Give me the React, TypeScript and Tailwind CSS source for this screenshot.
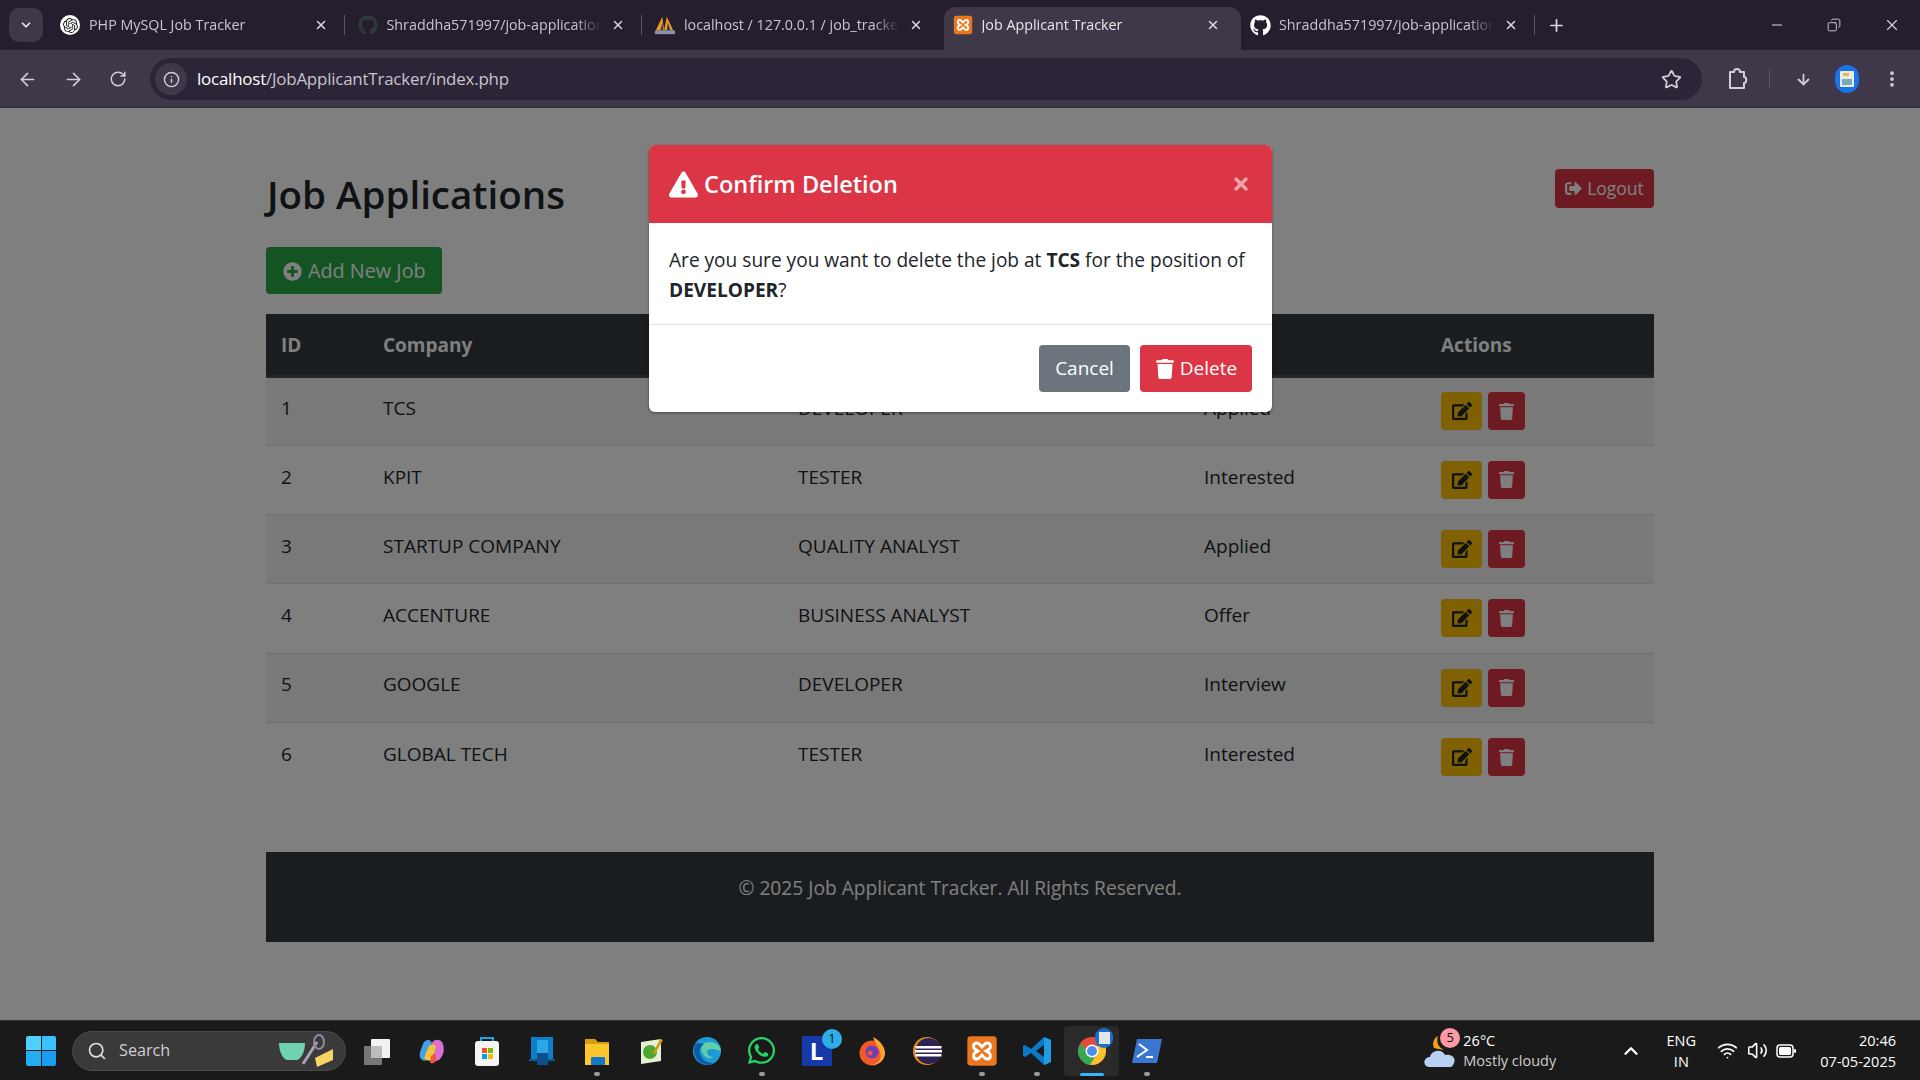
import React from "react";
import { FaExclamationTriangle, FaEdit, FaTrash, FaPlusCircle, FaSignOutAlt, FaGithub, FaWhatsapp } from "react-icons/fa";
import { SiOpenai } from "react-icons/si";
import { ArrowLeft, ArrowRight, RotateCw, Info, Star, ArrowDown, EllipsisVertical, X, Plus, Minus, ChevronDown, ChevronUp, Search, Wifi, Volume2, Copy } from "lucide-react";

const rows = [
  ["1", "TCS", "DEVELOPER", "Applied"],
  ["2", "KPIT", "TESTER", "Interested"],
  ["3", "STARTUP COMPANY", "QUALITY ANALYST", "Applied"],
  ["4", "ACCENTURE", "BUSINESS ANALYST", "Offer"],
  ["5", "GOOGLE", "DEVELOPER", "Interview"],
  ["6", "GLOBAL TECH", "TESTER", "Interested"],
];

function Xampp({ s = 20 }: { s?: number }) {
  return (
    <svg width={s} height={s} viewBox="0 0 24 24">
      <rect x="1" y="1" width="22" height="22" rx="2.500" fill="#e8771f" />
      <path d="M8 6c-2.500 0-3 3-1.500 4.500L9 12l-2.500 1.500C5 15 5.500 18 8 18c2 0 3-2 4-3 1 1 2 3 4 3 2.500 0 3-3 1.500-4.500L15 12l2.500-1.500C19 9 18.500 6 16 6c-2 0-3 2-4 3-1-1-2-3-4-3z" fill="none" stroke="#fff" strokeWidth="2.200" />
    </svg>
  );
}

function Pma() {
  return (
    <svg width="22" height="22" viewBox="0 0 24 24">
      <path d="M2 18 9 3l2 15zM11 18l3-15 7 15z" fill="#f09a1c" />
      <path d="M7 18 9 9l1 9zM14 18l1-9 3 9z" fill="#27396b" />
      <rect x="1" y="18" width="22" height="4" fill="#8c8fa6" />
    </svg>
  );
}

function Tab({ icon, title, active, sep }: { icon: React.ReactNode; title: string; active?: boolean; sep?: boolean }) {
  return (
    <div className={`relative flex h-[43px] w-[297.500px] shrink-0 items-center self-end pb-[7px] pl-[8px] pr-[21px] ${active ? "rounded-t-[12px] bg-[#3f3848] text-[#e8e6ea]" : "text-[#c9c5cf]"}`}>
      <span className="flex h-[22px] w-[22px] shrink-0 items-center justify-center">{icon}</span>
      <span className="ml-[8px] flex-1 overflow-hidden whitespace-nowrap text-[14.300px] [mask-image:linear-gradient(to_right,black_88%,transparent)]">{title}</span>
      <X size={14} strokeWidth={2.500} className="ml-[10px] shrink-0 text-[#dcd9e0]" />
      {sep && <span className="absolute right-[4px] top-[8px] h-[20px] w-px bg-[#5a5463]" />}
    </div>
  );
}

function Chrome() {
  return (
    <div className="h-[108px] bg-[#251e2f] font-['Open_Sans',sans-serif]">
      <div className="flex h-[50px] items-end">
        <div className="ml-[9px] mr-[8px] mb-[8px] flex h-[34px] w-[34px] shrink-0 items-center justify-center rounded-[10px] bg-[#3f3848] text-[#e8e6ea]">
          <ChevronDown size={14} strokeWidth={3} />
        </div>
        <Tab sep title="PHP MySQL Job Tracker" icon={<span className="flex h-[20px] w-[20px] items-center justify-center rounded-full bg-white"><SiOpenai size={15} className="text-[#222]" /></span>} />
        <Tab sep title="Shraddha571997/job-application-tracker" icon={<FaGithub size={20} className="text-[#2f3a3a]" />} />
        <Tab title="localhost / 127.0.0.1 / job_tracker" icon={<Pma />} />
        <Tab active title="Job Applicant Tracker" icon={<Xampp />} />
        <Tab sep title="Shraddha571997/job-application-tracker" icon={<FaGithub size={21} className="text-white" />} />
        <div className="ml-[8px] flex h-[43px] items-center pb-[7px] text-[#dcd9e0]"><Plus size={19} strokeWidth={2.200} /></div>
        <div className="ml-auto flex h-[43px] items-center gap-[42px] pb-[7px] pr-[19px] text-[#dcd9e0]">
          <Minus size={16} strokeWidth={1.500} />
          <Copy size={14} strokeWidth={1.500} className="-scale-x-100" />
          <X size={18} strokeWidth={1.500} />
        </div>
      </div>
      <div className="flex h-[58px] items-center border-b-[2px] border-[#37313f] bg-[#3f3848] pt-[2px] text-[#d3cfd8]">
        <div className="flex w-[150px] items-center gap-[25px] pl-[17px]">
          <ArrowLeft size={21} strokeWidth={1.800} />
          <ArrowRight size={21} strokeWidth={1.800} />
          <RotateCw size={18} strokeWidth={2} />
        </div>
        <div className="flex h-[42px] w-[1552px] items-center rounded-full bg-[#2c2537] pl-[5px] pr-[20px]">
          <span className="flex h-[32px] w-[32px] items-center justify-center rounded-full bg-[#3f3848]"><Info size={17} /></span>
          <span className="ml-[10px] text-[16.900px] tracking-[-0.2px] text-[#c8c4ce]"><span className="text-white">localhost</span>/JobApplicantTracker/index.php</span>
          <Star size={21} strokeWidth={2} className="ml-auto" />
        </div>
        <svg width="22" height="24" viewBox="0 0 22 24" fill="none" stroke="currentColor" strokeWidth="2" className="ml-[24px]">
          <path d="M4 5h4c0-4 6-4 6 0h4v5c3 0 3 6 0 6v5H4z" strokeLinejoin="round" />
        </svg>
        <span className="ml-[21px] h-[20px] w-px bg-[#5a5463]" />
        <ArrowDown size={17} strokeWidth={2.500} className="ml-[25px]" />
        <span className="ml-[23px] flex h-[28px] w-[24px] items-center justify-center rounded-full bg-[#1a73e8]">
          <svg width="16" height="18" viewBox="0 0 16 18"><rect x="1" y="1" width="14" height="16" rx="1" fill="#e4ece8" /><rect x="3" y="9" width="10" height="6" fill="#7aa9b8" /><rect x="4" y="3" width="6" height="3" fill="#e8b948" /></svg>
        </span>
        <EllipsisVertical size={20} strokeWidth={2.500} className="ml-[23px]" />
      </div>
    </div>
  );
}

function Page() {
  return (
    <main className="relative h-[912px] overflow-hidden bg-white font-['Open_Sans',sans-serif] text-[#212529]">
      <div className="mx-auto w-[1388px] pt-[60px]">
        <div className="flex items-start justify-between">
          <h2 className="ml-[1px] mt-[3px] text-[38.500px] font-semibold leading-[47px]">Job Applications</h2>
          <button className="mt-[1px] flex h-[39px] w-[99px] items-center justify-center gap-[5px] rounded-[4px] bg-[#dc3545] text-[17.500px] text-white"><FaSignOutAlt size={17} />Logout</button>
        </div>
        <button className="mt-[29px] flex h-[47px] w-[176px] items-center gap-[6px] rounded-[4px] bg-[#28a745] pl-[17px] pt-[1px] text-[19.800px] text-white"><FaPlusCircle size={19} />Add New Job</button>
        <table className="mt-[20px] w-full table-fixed border-collapse text-[19px]">
          <colgroup>
            <col className="w-[102px]" />
            <col className="w-[415px]" />
            <col className="w-[406px]" />
            <col className="w-[237px]" />
            <col className="w-[228px]" />
          </colgroup>
          <thead>
            <tr className="h-[62px] border-b-[3px] border-[#454d55] bg-[#343a40] text-white">
              {["ID", "Company", "Position", "Status", "Actions"].map((h) => (
                <th key={h} className="px-[15px] pt-[2px] text-left font-bold">{h}</th>
              ))}
            </tr>
          </thead>
          <tbody>
            {rows.map((r, i) => (
              <tr key={r[0]} className={`h-[69.250px] ${i < 5 ? "border-b border-[#dee2e6]" : ""} ${i % 2 === 0 ? "bg-[#f2f2f2]" : "bg-white"}`}>
                {r.map((c) => (
                  <td key={c} className="px-[15px] pb-[6px]">{c}</td>
                ))}
                <td className="px-[15px]">
                  <div className="flex gap-[6px]">
                    <span className="flex h-[38px] w-[41px] items-center justify-center rounded-[4px] bg-[#ffc107] text-[#212529]"><FaEdit size={20} /></span>
                    <span className="flex h-[38px] w-[37px] items-center justify-center rounded-[4px] bg-[#dc3545] text-white"><FaTrash size={17} /></span>
                  </div>
                </td>
              </tr>
            ))}
          </tbody>
        </table>
        <footer className="mt-[60.500px] h-[90px] bg-[#343a40] pt-[22px] text-center text-[19.200px] text-white">© 2025 Job Applicant Tracker. All Rights Reserved.</footer>
      </div>

      <div className="absolute inset-0 bg-black/50" />
      <div className="absolute left-[649px] top-[37px] w-[623px] overflow-hidden rounded-[6px] bg-white shadow-[0_1px_3px_rgba(0,0,0,0.4)]">
        <div className="flex h-[78px] items-center bg-[#dc3545] pl-[20px] pr-[21px] text-white">
          <FaExclamationTriangle size={29} />
          <span className="ml-[6px] mt-[2px] text-[23.500px] font-semibold">Confirm Deletion</span>
          <X size={20} strokeWidth={4} className="ml-auto text-[#eea5ac]" />
        </div>
        <div className="h-[102px] border-b border-[#dee2e6] px-[20px] pt-[23px] text-[19.100px] leading-[29.500px] text-[#212529]">
          Are you sure you want to delete the job at <b>TCS</b> for the position of <b>DEVELOPER</b>?
        </div>
        <div className="flex h-[87px] items-start justify-end gap-[10px] pr-[20px] pt-[20px]">
          <button className="h-[47px] w-[91px] rounded-[4px] bg-[#6c757d] text-[19px] text-white">Cancel</button>
          <button className="flex h-[47px] w-[112px] items-center justify-center gap-[5px] rounded-[4px] bg-[#dc3545] text-[19px] text-white"><FaTrash size={20} />Delete</button>
        </div>
      </div>
    </main>
  );
}

function TIcon({ children, dot, active }: { children: React.ReactNode; dot?: boolean; active?: boolean }) {
  return (
    <div className={`relative flex h-[50px] w-[55px] items-center justify-center rounded-[4px] ${active ? "bg-[#2a2a2a]" : ""}`}>
      {children}
      {dot && <span className="absolute bottom-0 left-1/2 h-[4px] w-[6px] -translate-x-1/2 rounded-full bg-[#9a9a9a]" />}
      {active && <span className="absolute bottom-0 left-1/2 h-[3px] w-[24px] -translate-x-1/2 rounded-full bg-[#38b6ff]" />}
    </div>
  );
}

function Taskbar() {
  return (
    <div className="flex h-[60px] items-center border-t border-[#333] bg-[#1a1a1a] font-['Open_Sans',sans-serif] text-white">
      <div className="ml-[26px] grid h-[30px] w-[30px] grid-cols-2 gap-[1px]">
        <span className="rounded-tl-[2px] bg-[#50d0ff]" /><span className="rounded-tr-[2px] bg-[#39c2fb]" />
        <span className="rounded-bl-[2px] bg-[#22adf5]" /><span className="rounded-br-[2px] bg-[#1a9df0]" />
      </div>
      <div className="ml-[16px] flex h-[40px] w-[274px] items-center rounded-full border border-[#4a4a4a] bg-[#3a3a3a] pl-[14px]">
        <Search size={20} strokeWidth={2} className="text-[#ddd]" />
        <span className="ml-[12px] text-[16.200px] text-[#d0d0d0]">Search</span>
        <svg width="62" height="34" viewBox="0 0 62 34" className="ml-auto mr-[6px]">
          <path d="M2 9h26c0 9-4 16-8 17H10C6 25 2 18 2 9z" fill="#6fd3b3" />
          <path d="M26 30 40 8" stroke="#a9a2b8" strokeWidth="3" />
          <ellipse cx="42" cy="8" rx="5" ry="7" fill="none" stroke="#8f889c" strokeWidth="2" />
          <path d="M38 24l18-9v11l-16 7z" fill="#f6d465" />
        </svg>
      </div>
      <div className="ml-[3px] flex items-center">
        <TIcon><svg width="30" height="30" viewBox="0 0 30 30"><rect x="9" y="3" width="19" height="19" rx="1" fill="#f1f1f1" /><rect x="2" y="10" width="18" height="19" rx="1" fill="#777" /><rect x="9" y="10" width="11" height="12" fill="#bdbdbd" /></svg></TIcon>
        <TIcon><svg width="30" height="30" viewBox="0 0 30 30"><path d="M6 8c2-5 8-5 9-1l-3 14c-1 4-5 5-8 2-3-4 0-10 2-15z" fill="#3fa0e8" /><path d="M15 7c2-4 7-4 10-1 3 5 2 13-2 17-3 3-8 3-9-1z" fill="#d96fd0" /><path d="M7 22c3 3 7 4 9 0l3-12c-4-3-7-1-8 2z" fill="#f4c23c" /><path d="M13 27c3 1 6 0 6-4l-1-6-4 3z" fill="#ee5a3a" /></svg></TIcon>
        <TIcon><svg width="26" height="30" viewBox="0 0 26 30"><path d="M7 6V2h12v4" fill="none" stroke="#18a8e8" strokeWidth="2" /><rect x="1" y="5" width="24" height="25" rx="3" fill="#f5f5f5" /><rect x="8" y="12" width="5" height="5" fill="#f25022" /><rect x="14" y="12" width="5" height="5" fill="#7fba00" /><rect x="8" y="18" width="5" height="5" fill="#00a4ef" /><rect x="14" y="18" width="5" height="5" fill="#ffb900" /></svg></TIcon>
        <TIcon><svg width="30" height="30" viewBox="0 0 30 30"><path d="M4 1h22v24H4z" fill="#0d7fc9" /><path d="M2 23h26v2H2z" fill="#0a5d9a" /><rect x="10" y="4" width="11" height="25" rx="1" fill="#2aa9e4" /><rect x="10" y="17" width="11" height="12" fill="#0b4f8f" /></svg></TIcon>
        <TIcon dot><svg width="30" height="28" viewBox="0 0 30 28"><path d="M3 2h10l3 3h11v23H3z" fill="#d99b0f" /><rect x="3" y="7" width="24" height="21" fill="#fcc62d" /><rect x="9" y="20" width="14" height="8" rx="1" fill="#1277c9" /></svg></TIcon>
        <TIcon><svg width="28" height="28" viewBox="0 0 28 28"><path d="M3 5l20-3v22l-20 3z" fill="#e5f0d6" /><circle cx="12" cy="15" r="7" fill="#4ea72e" /><path d="M22 2l3 1-8 14-2-1z" fill="#d99b0f" /></svg></TIcon>
        <TIcon><svg width="30" height="30" viewBox="0 0 30 30"><circle cx="15" cy="15" r="14" fill="#1c9ad6" /><path d="M29 16c0-7-6-10-12-10-6 0-9 5-7 10 2 5 7 8 12 5-4 0-7-2-7-5 0-2 2-3 5-3 4 0 9 2 9 3z" fill="#5fd0a8" /><path d="M3 8c-3 8 1 18 9 20 3 1 6 1 9-1-7 0-12-4-13-10-1-4 1-7 4-9-3-1-7-1-9 0z" fill="#0c5aa6" /></svg></TIcon>
        <TIcon dot><FaWhatsapp size={31} className="text-[#25d366]" /></TIcon>
        <TIcon>
          <span className="relative flex h-[30px] w-[30px] items-center justify-center bg-[#1739a8] text-[24px] font-bold leading-none text-white">L</span>
          <span className="absolute right-[2px] top-[3px] flex h-[20px] w-[20px] items-center justify-center rounded-full bg-[#2eaee8] text-[13px] text-[#111]">1</span>
        </TIcon>
        <TIcon><svg width="30" height="30" viewBox="0 0 30 30"><circle cx="15" cy="17" r="12.500" fill="#f05a28" /><path d="M16 1c6 3 12 9 12 16 0 7-6 12-13 12 8-2 10-8 8-13-1-5-5-9-7-15z" fill="#ffa52c" /><circle cx="15" cy="16" r="6.500" fill="#6f3dc2" /><circle cx="13" cy="17" r="2.500" fill="#f05a28" /></svg></TIcon>
        <TIcon><svg width="30" height="30" viewBox="0 0 30 30"><circle cx="15" cy="15" r="14" fill="#e8881c" /><circle cx="16.500" cy="15" r="13" fill="#2c2255" /><rect x="3.500" y="10" width="26" height="2.500" fill="#fff" /><rect x="3" y="14" width="27" height="2.500" fill="#fff" /><rect x="3.500" y="18" width="26" height="2.500" fill="#fff" /></svg></TIcon>
        <TIcon dot><Xampp s={32} /></TIcon>
        <TIcon dot><svg width="30" height="30" viewBox="0 0 30 30"><path d="M22 1l7 3v22l-7 3-13-12-6 4-2-1v-10l2-1 6 4z" fill="#0a7ac6" /><path d="M22 1l7 3v22l-7 3z" fill="#1e9de4" /><path d="M22 9v12l-8-6z" fill="#1a1a1a" /></svg></TIcon>
        <TIcon active>
          <svg width="30" height="30" viewBox="0 0 30 30"><circle cx="15" cy="15" r="14" fill="#e8483a" /><path d="M1 15c0 7 5 13 12 14l6-10H11L5 7C3 9 1 12 1 15z" fill="#34a853" /><path d="M13 29c9 1 16-6 16-14 0-2 0-3-1-5H15c3 0 5 2 5 5 0 1 0 3-1 4z" fill="#fbc02d" /><circle cx="15" cy="15" r="6.500" fill="#fff" /><circle cx="15" cy="15" r="5" fill="#4a8ff0" /></svg>
          <span className="absolute right-[6px] top-[2px] flex h-[20px] w-[18px] items-center justify-center rounded-full bg-[#1a6fd0]"><span className="h-[12px] w-[11px] bg-[#dfe8e6]" /></span>
        </TIcon>
        <TIcon dot><svg width="30" height="26" viewBox="0 0 30 26"><path d="M5 1h25l-5 24H0z" fill="#3a76d0" /><path d="M7 6l8 6-10 7" fill="none" stroke="#fff" strokeWidth="2" /><path d="M14 19h7" stroke="#fff" strokeWidth="2" /></svg></TIcon>
      </div>
      <div className="ml-auto flex items-center">
        <div className="relative h-[40px] w-[34px]">
          <svg width="34" height="36" viewBox="0 0 34 36" className="absolute left-0 top-[3px]"><path d="M14 2c-4 2-6 7-4 12l10 2C14 13 12 8 14 2z" fill="#f1a20f" /><path d="M6 33c-8 0-7-10 0-10 1-7 12-9 15-2 8-1 12 4 8 10-1 2-2 2-4 2z" fill="#b6d1f3" /></svg>
          <span className="absolute right-[-2px] top-[-3px] flex h-[20px] w-[20px] items-center justify-center rounded-full bg-[#ff99a4] text-[13px] text-[#111]">5</span>
        </div>
        <div className="ml-[5px] w-[138px] text-[14.500px] leading-[20px]">
          <div>26°C</div>
          <div className="text-[#cfcfcf]">Mostly cloudy</div>
        </div>
        <ChevronUp size={22} strokeWidth={2.500} className="ml-[19px]" />
        <div className="ml-[17px] w-[44px] text-center text-[14.500px] leading-[21px]">ENG<br />IN</div>
        <Wifi size={21} strokeWidth={2} className="ml-[14px]" />
        <Volume2 size={21} strokeWidth={1.800} className="ml-[9px]" />
        <svg width="20" height="14" viewBox="0 0 20 14" className="ml-[8px]"><rect x="1" y="1" width="16" height="12" rx="3" fill="none" stroke="#fff" strokeWidth="1.500" /><rect x="3" y="3" width="12" height="8" rx="1.500" fill="#fff" /><rect x="18" y="5" width="2" height="4" rx="1" fill="#fff" /></svg>
        <div className="ml-[24px] mr-[24px] text-right text-[14.500px] leading-[21px]">20:46<br />07-05-2025</div>
      </div>
    </div>
  );
}

export default function App() {
  return (
    <div className="h-[1080px] w-[1920px] overflow-hidden">
      <Chrome />
      <Page />
      <Taskbar />
    </div>
  );
}
